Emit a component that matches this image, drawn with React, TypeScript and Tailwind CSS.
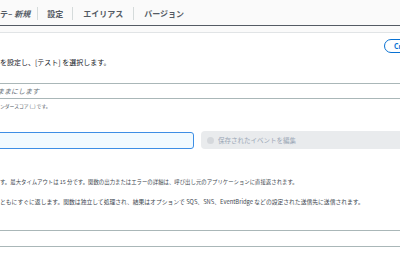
import React from "react";

const Sep = () => <span className="w-px h-[13px] bg-[#d5dbdb]" />;

export default function App() {
  return (
    <div className="w-[400px] h-[260px] overflow-hidden bg-white font-['Noto_Sans_CJK_JP',sans-serif] text-[#16191f]">
      {/* tabs */}
      <div className="h-[26px] bg-[#fafafa] border-b-[1.5px] border-[#545b64] flex items-center text-[8px] font-bold text-[#545b64] leading-none pt-[2px]">
        <span className="pr-[7px] whitespace-nowrap">
          テ– <i className="font-bold">新規</i>
        </span>
        <Sep />
        <span className="px-[9px]">設定</span>
        <Sep />
        <span className="px-[10px]">エイリアス</span>
        <Sep />
        <span className="px-[10px]">バージョン</span>
      </div>
      <div className="h-[7px] bg-[#fafafa] border-b border-[#e1e4e6]" />

      {/* header row with button */}
      <div className="flex justify-end pt-[6px]">
        <button className="-mr-[34px] w-[50px] h-[14px] pl-[9px] text-left rounded-full border-[1.5px] border-[#0972d3] text-[#0972d3] text-[7px] font-bold leading-none">
          Create
        </button>
      </div>
      <p className="mt-[3px] text-[7px] leading-[12px] whitespace-nowrap">
        を設定し、[テスト] を選択します。
      </p>

      {/* event name input */}
      <div className="mt-[15px] h-[16px] border-y border-[#aab7b8] flex items-center">
        <span className="-ml-[3px] text-[7px] italic text-[#687078] leading-none">ままにします</span>
      </div>
      <p className="mt-[2px] text-[4.8px] leading-[10px] text-[#545b64] whitespace-nowrap">
        ンダースコア (_) です。
      </p>

      {/* inputs row */}
      <div className="mt-[20px] flex items-center gap-[7px]">
        <div className="-ml-[4px] w-[198px] h-[17px] rounded-[3px] border-[1.5px] border-[#3d8ee5] bg-[#f1faff]" />
        <div className="flex-1 -mr-[20px] h-[18px] rounded-[4px] bg-[#e9ebed] flex items-center pl-[6px] gap-[4px]">
          <span className="w-[7px] h-[7px] rounded-full bg-[#d5d8dc]" />
          <span className="text-[6.5px] text-[#9ba7b6] leading-none whitespace-nowrap">保存されたイベントを編集</span>
        </div>
      </div>

      {/* descriptions */}
      <p className="mt-[28px] text-[5.4px] leading-[10px] text-[#414750] whitespace-nowrap">
        す。最大タイムアウトは 15 分です。関数の出力またはエラーの詳細は、呼び出し元のアプリケーションに直接返されます。
      </p>
      <p className="mt-[10px] text-[5.8px] leading-[10px] text-[#414750] whitespace-nowrap">
        ともにすぐに返します。関数は独立して処理され、結果はオプションで SQS、SNS、EventBridge などの設定された送信先に送信されます。
      </p>

      {/* next input */}
      <div className="mt-[23px] h-[17px] border-y border-[#aab7b8]" />
    </div>
  );
}
